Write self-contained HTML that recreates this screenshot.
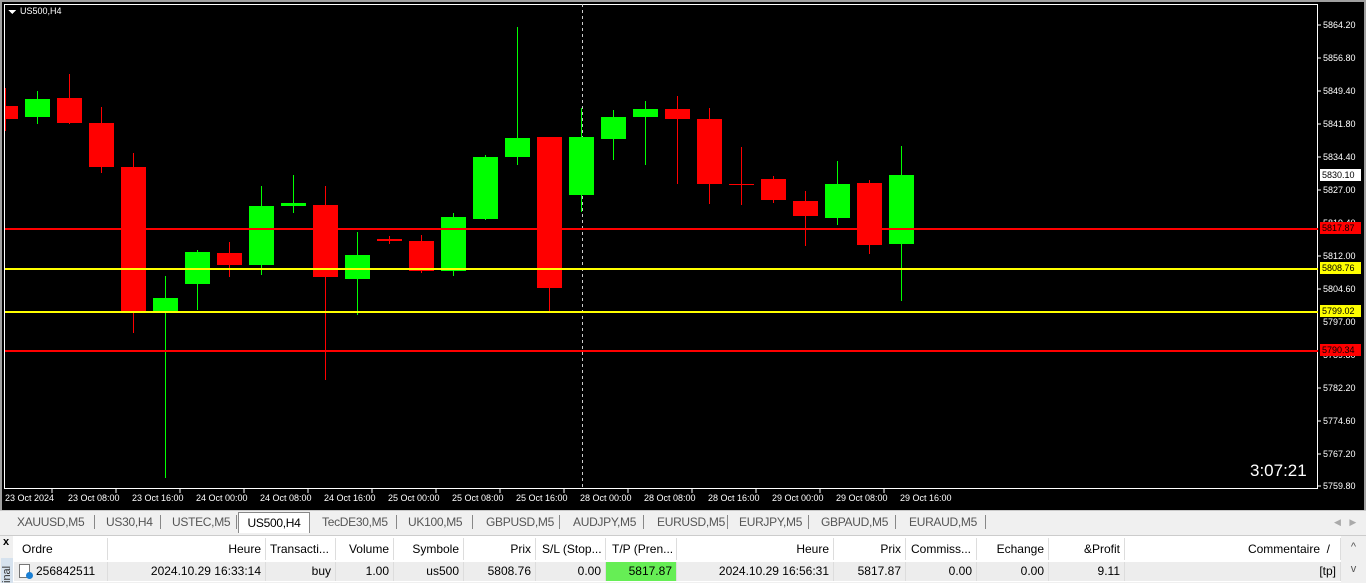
<!DOCTYPE html>
<html><head><meta charset="utf-8"><style>
*{margin:0;padding:0;box-sizing:border-box}
body{width:1366px;height:582px;overflow:hidden;background:#f0f0f0;font-family:"Liberation Sans",sans-serif;position:relative}
#chart{position:absolute;left:0;top:0;width:1366px;height:510px;background:#000;border-top:2px solid #a0a0a0;border-left:2px solid #a0a0a0;border-right:2px solid #a0a0a0}
svg text{font-family:"Liberation Sans",sans-serif}
#tabs{position:absolute;left:0;top:510px;width:1366px;height:24px;background:#f0f0f0;border-top:1px solid #c8c8c8;font-size:12px;color:#555;letter-spacing:-0.3px}
.tab{position:absolute;top:4px;height:17px;line-height:15px;padding-left:6px}
.sep{position:absolute;top:4px;width:1px;height:14px;background:#888}
#act{position:absolute;left:238px;top:1px;width:72px;height:21px;background:#fff;border:1px solid #888;border-bottom:none;color:#000;text-align:center;line-height:20px}
#term{position:absolute;left:0;top:535px;width:1366px;height:47px;background:#fff;border-top:1px solid #ccc}
.c{position:absolute;font-size:12px;color:#000;height:22px;line-height:22px;white-space:nowrap;overflow:hidden}
.h{top:2px;border-right:1px solid #ddd}
.r{top:26px;background:#ededed;height:19px;line-height:19px;border-right:1px solid #ddd}
.ra{text-align:right;padding-right:4px}
.la{padding-left:8px}
.hl{position:absolute;left:5px;width:1313px;height:1px}
</style></head><body>
<div id="chart">
<svg width="1364" height="508" style="position:absolute;left:0;top:0" viewBox="2 2 1364 508" shape-rendering="crispEdges">
<rect x="4.5" y="4.5" width="1313" height="484" fill="none" stroke="#fff" stroke-width="1"/>
<polygon points="8,10 16,10 12,14" fill="#fff"/>
<text x="20" y="14" fill="#fff" font-size="9">US500,H4</text>
<line x1="582.5" y1="4" x2="582.5" y2="489" stroke="#ccc" stroke-dasharray="3,3"/>
<g fill="#f00" stroke="#f00">
<line x1="5.5" y1="88" x2="5.5" y2="131"/><rect x="5" y="106" width="13" height="13" stroke="none"/>
<line x1="69.5" y1="74" x2="69.5" y2="124"/><rect x="57" y="98" width="25" height="25" stroke="none"/>
<line x1="101.5" y1="107" x2="101.5" y2="173"/><rect x="89" y="123" width="25" height="44" stroke="none"/>
<line x1="133.5" y1="153" x2="133.5" y2="333"/><rect x="121" y="167" width="25" height="145" stroke="none"/>
<line x1="229.5" y1="242" x2="229.5" y2="277"/><rect x="217" y="253" width="25" height="12" stroke="none"/>
<line x1="325.5" y1="186" x2="325.5" y2="380"/><rect x="313" y="205" width="25" height="72" stroke="none"/>
<line x1="389.5" y1="236" x2="389.5" y2="244"/><rect x="377" y="239" width="25" height="2" stroke="none"/>
<line x1="421.5" y1="235" x2="421.5" y2="273"/><rect x="409" y="241" width="25" height="30" stroke="none"/>
<line x1="549.5" y1="137" x2="549.5" y2="312"/><rect x="537" y="137" width="25" height="151" stroke="none"/>
<line x1="677.5" y1="96" x2="677.5" y2="184"/><rect x="665" y="109" width="25" height="10" stroke="none"/>
<line x1="709.5" y1="108" x2="709.5" y2="204"/><rect x="697" y="119" width="25" height="65" stroke="none"/>
<line x1="741.5" y1="147" x2="741.5" y2="205"/><rect x="729" y="184" width="25" height="1" stroke="none"/>
<line x1="773.5" y1="176" x2="773.5" y2="203"/><rect x="761" y="179" width="25" height="21" stroke="none"/>
<line x1="805.5" y1="191" x2="805.5" y2="246"/><rect x="793" y="201" width="25" height="15" stroke="none"/>
<line x1="869.5" y1="180" x2="869.5" y2="254"/><rect x="857" y="183" width="25" height="62" stroke="none"/>
</g>
<g fill="#0f0" stroke="#0f0">
<line x1="37.5" y1="91" x2="37.5" y2="124"/><rect x="25" y="99" width="25" height="18" stroke="none"/>
<line x1="165.5" y1="276" x2="165.5" y2="478"/><rect x="153" y="298" width="25" height="14" stroke="none"/>
<line x1="197.5" y1="250" x2="197.5" y2="310"/><rect x="185" y="252" width="25" height="32" stroke="none"/>
<line x1="261.5" y1="186" x2="261.5" y2="275"/><rect x="249" y="206" width="25" height="59" stroke="none"/>
<line x1="293.5" y1="175" x2="293.5" y2="213"/><rect x="281" y="203" width="25" height="3" stroke="none"/>
<line x1="357.5" y1="232" x2="357.5" y2="315"/><rect x="345" y="255" width="25" height="24" stroke="none"/>
<line x1="453.5" y1="213" x2="453.5" y2="276"/><rect x="441" y="217" width="25" height="54" stroke="none"/>
<line x1="485.5" y1="155" x2="485.5" y2="220"/><rect x="473" y="157" width="25" height="62" stroke="none"/>
<line x1="517.5" y1="27" x2="517.5" y2="165"/><rect x="505" y="138" width="25" height="19" stroke="none"/>
<line x1="581.5" y1="108" x2="581.5" y2="212"/><rect x="569" y="137" width="25" height="58" stroke="none"/>
<line x1="613.5" y1="110" x2="613.5" y2="160"/><rect x="601" y="117" width="25" height="22" stroke="none"/>
<line x1="645.5" y1="101" x2="645.5" y2="165"/><rect x="633" y="109" width="25" height="8" stroke="none"/>
<line x1="837.5" y1="161" x2="837.5" y2="225"/><rect x="825" y="184" width="25" height="34" stroke="none"/>
<line x1="901.5" y1="146" x2="901.5" y2="301"/><rect x="889" y="175" width="25" height="69" stroke="none"/>
</g>
<rect x="5" y="228" width="1313" height="2" fill="#f00"/>
<rect x="5" y="268" width="1313" height="2" fill="#ff0"/>
<rect x="5" y="311" width="1313" height="2" fill="#ff0"/>
<rect x="5" y="350" width="1313" height="2" fill="#f00"/>
<g fill="#fff" font-size="9">
<text x="1323" y="28">5864.20</text><text x="1323" y="61">5856.80</text><text x="1323" y="94">5849.40</text>
<text x="1323" y="127">5841.80</text><text x="1323" y="160">5834.40</text><text x="1323" y="193">5827.00</text>
<text x="1323" y="226">5819.40</text><text x="1323" y="259">5812.00</text><text x="1323" y="292">5804.60</text>
<text x="1323" y="325">5797.00</text><text x="1323" y="358">5789.80</text><text x="1323" y="391">5782.20</text>
<text x="1323" y="424">5774.60</text><text x="1323" y="457">5767.20</text><text x="1323" y="489">5759.80</text>
</g>
<g stroke="#fff"><line x1="1318" y1="25" x2="1321" y2="25"/><line x1="1318" y1="58" x2="1321" y2="58"/><line x1="1318" y1="91" x2="1321" y2="91"/><line x1="1318" y1="124" x2="1321" y2="124"/><line x1="1318" y1="157" x2="1321" y2="157"/><line x1="1318" y1="190" x2="1321" y2="190"/><line x1="1318" y1="256" x2="1321" y2="256"/><line x1="1318" y1="289" x2="1321" y2="289"/><line x1="1318" y1="388" x2="1321" y2="388"/><line x1="1318" y1="421" x2="1321" y2="421"/><line x1="1318" y1="454" x2="1321" y2="454"/><line x1="1318" y1="486" x2="1321" y2="486"/></g>
<rect x="1320" y="169" width="41" height="12" fill="#fff"/><text x="1322" y="178" font-size="9" fill="#000">5830.10</text>
<rect x="1320" y="222" width="41" height="12" fill="#f00"/><text x="1322" y="231" font-size="9" fill="#000">5817.87</text>
<rect x="1320" y="262" width="41" height="12" fill="#ff0"/><text x="1322" y="271" font-size="9" fill="#000">5808.76</text>
<rect x="1320" y="305" width="41" height="12" fill="#ff0"/><text x="1322" y="314" font-size="9" fill="#000">5799.02</text>
<rect x="1320" y="344" width="41" height="12" fill="#f00"/><text x="1322" y="353" font-size="9" fill="#000">5790.34</text>
<text x="1250" y="476" fill="#fff" font-size="17">3:07:21</text>
<g fill="#fff" font-size="9">
<text x="5" y="501">23 Oct 2024</text><text x="68" y="501">23 Oct 08:00</text><text x="132" y="501">23 Oct 16:00</text>
<text x="196" y="501">24 Oct 00:00</text><text x="260" y="501">24 Oct 08:00</text><text x="324" y="501">24 Oct 16:00</text>
<text x="388" y="501">25 Oct 00:00</text><text x="452" y="501">25 Oct 08:00</text><text x="516" y="501">25 Oct 16:00</text>
<text x="580" y="501">28 Oct 00:00</text><text x="644" y="501">28 Oct 08:00</text><text x="708" y="501">28 Oct 16:00</text>
<text x="772" y="501">29 Oct 00:00</text><text x="836" y="501">29 Oct 08:00</text><text x="900" y="501">29 Oct 16:00</text>
</g>
<g stroke="#fff"><line x1="52" y1="489" x2="52" y2="493"/><line x1="116" y1="489" x2="116" y2="493"/><line x1="180" y1="489" x2="180" y2="493"/><line x1="244" y1="489" x2="244" y2="493"/><line x1="308" y1="489" x2="308" y2="493"/><line x1="372" y1="489" x2="372" y2="493"/><line x1="436" y1="489" x2="436" y2="493"/><line x1="500" y1="489" x2="500" y2="493"/><line x1="564" y1="489" x2="564" y2="493"/><line x1="628" y1="489" x2="628" y2="493"/><line x1="692" y1="489" x2="692" y2="493"/><line x1="756" y1="489" x2="756" y2="493"/><line x1="820" y1="489" x2="820" y2="493"/><line x1="884" y1="489" x2="884" y2="493"/></g>
</svg>
</div>
<div id="tabs">
<div class="tab" style="left:11px">XAUUSD,M5</div><div class="sep" style="left:94px"></div>
<div class="tab" style="left:100px">US30,H4</div><div class="sep" style="left:160px"></div>
<div class="tab" style="left:166px">USTEC,M5</div><div class="sep" style="left:236px"></div>
<div id="act">US500,H4</div>
<div class="tab" style="left:316px">TecDE30,M5</div><div class="sep" style="left:396px"></div>
<div class="tab" style="left:402px">UK100,M5</div><div class="sep" style="left:472px"></div>
<div class="tab" style="left:480px">GBPUSD,M5</div><div class="sep" style="left:559px"></div>
<div class="tab" style="left:567px">AUDJPY,M5</div><div class="sep" style="left:643px"></div>
<div class="tab" style="left:651px">EURUSD,M5</div><div class="sep" style="left:727px"></div>
<div class="tab" style="left:733px">EURJPY,M5</div><div class="sep" style="left:808px"></div>
<div class="tab" style="left:815px">GBPAUD,M5</div><div class="sep" style="left:895px"></div>
<div class="tab" style="left:903px">EURAUD,M5</div><div class="sep" style="left:985px"></div>
<div class="tab" style="left:1328px;color:#aaa;font-size:9px">◀&nbsp;&nbsp;&nbsp;&nbsp;▶</div>
</div>
<div id="term">
<div style="position:absolute;left:0;top:0;width:13px;height:47px;background:#f0f0f0"></div>
<div style="position:absolute;left:3px;top:0;font-size:11px;font-weight:bold">x</div>
<div style="position:absolute;left:1px;top:22px;width:12px;height:25px;background:#d6e2ee;font-size:11px;color:#333;writing-mode:vertical-rl;transform:rotate(180deg);line-height:12px">inal</div>
<div class="c h la" style="left:14px;width:94px">Ordre</div>
<div class="c h ra" style="left:108px;width:158px">Heure</div>
<div class="c h la" style="left:266px;width:70px;padding-left:4px">Transacti...</div>
<div class="c h ra" style="left:336px;width:58px">Volume</div>
<div class="c h ra" style="left:394px;width:70px">Symbole</div>
<div class="c h ra" style="left:464px;width:72px">Prix</div>
<div class="c h la" style="left:536px;width:70px;padding-left:6px">S/L (Stop...</div>
<div class="c h la" style="left:606px;width:71px;padding-left:6px">T/P (Pren...</div>
<div class="c h ra" style="left:677px;width:157px">Heure</div>
<div class="c h ra" style="left:834px;width:72px">Prix</div>
<div class="c h la" style="left:906px;width:71px;padding-left:5px">Commiss...</div>
<div class="c h ra" style="left:977px;width:72px">Echange</div>
<div class="c h ra" style="left:1049px;width:76px">&amp;Profit</div>
<div class="c h ra" style="left:1125px;width:216px;padding-right:10px">Commentaire &nbsp;/</div>
<div class="c r la" style="left:14px;width:94px;padding-left:22px">256842511</div>
<div style="position:absolute;left:19px;top:28px;width:11px;height:14px;border:1px solid #777;background:#fff"></div>
<div style="position:absolute;left:26px;top:36px;width:7px;height:7px;border-radius:50%;background:#1a7fd4"></div>
<div class="c r ra" style="left:108px;width:158px">2024.10.29 16:33:14</div>
<div class="c r ra" style="left:266px;width:70px">buy</div>
<div class="c r ra" style="left:336px;width:58px">1.00</div>
<div class="c r ra" style="left:394px;width:70px">us500</div>
<div class="c r ra" style="left:464px;width:72px">5808.76</div>
<div class="c r ra" style="left:536px;width:70px">0.00</div>
<div class="c r ra" style="left:606px;width:71px;background:#66ee55">5817.87</div>
<div class="c r ra" style="left:677px;width:157px">2024.10.29 16:56:31</div>
<div class="c r ra" style="left:834px;width:72px">5817.87</div>
<div class="c r ra" style="left:906px;width:71px">0.00</div>
<div class="c r ra" style="left:977px;width:72px">0.00</div>
<div class="c r ra" style="left:1049px;width:76px">9.11</div>
<div class="c r ra" style="left:1125px;width:216px">[tp]</div>
<div style="position:absolute;left:1341px;top:0;width:25px;height:47px;background:#f0f0f0;font-size:11px;color:#555;text-align:center;line-height:22px">^<br>v</div>
</div>
</body></html>
